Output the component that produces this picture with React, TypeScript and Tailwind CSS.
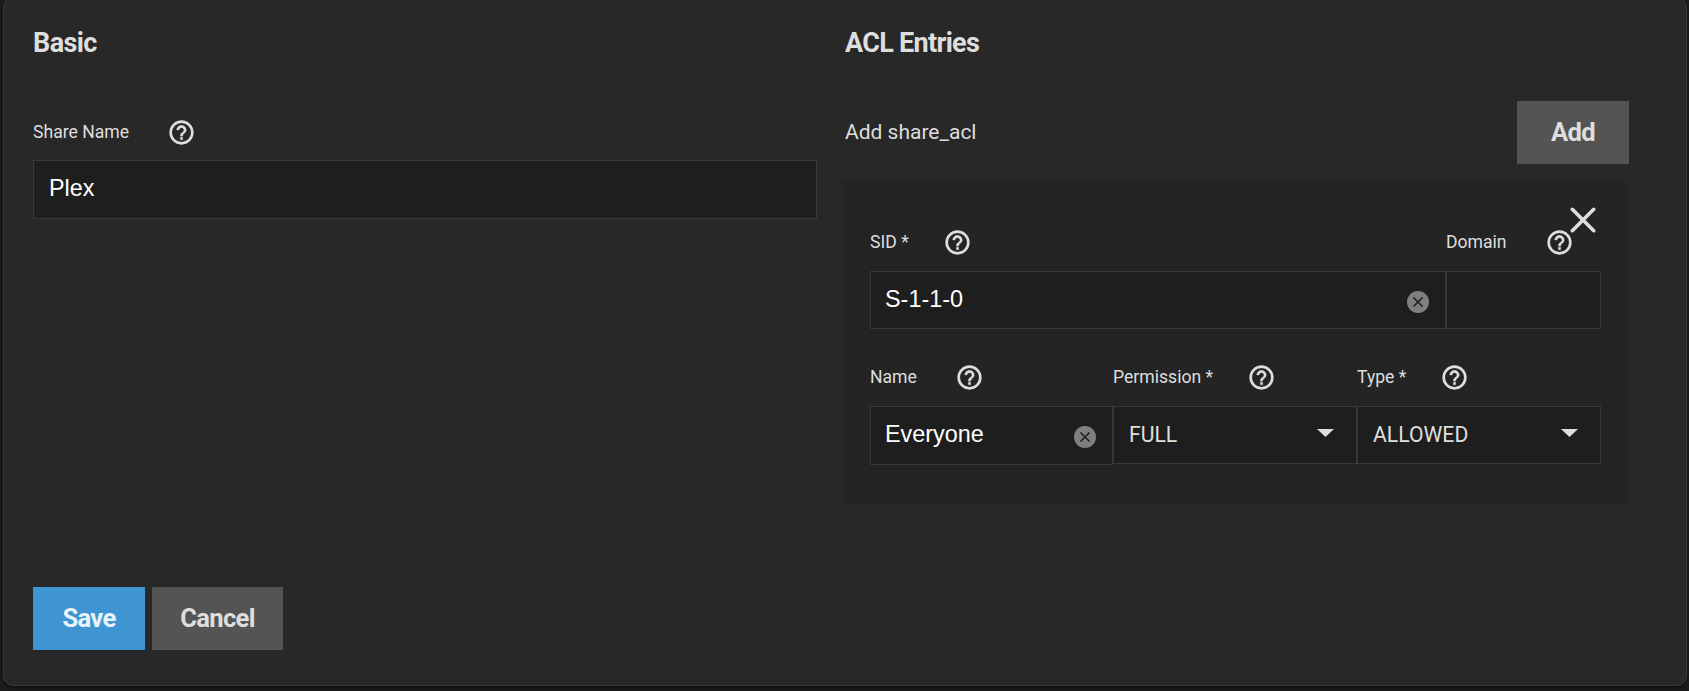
import type { ReactNode } from "react";

function HelpIcon() {
  return (
    <svg viewBox="0 0 24 24" fill="currentColor" className="-mt-px size-[29px] shrink-0">
      <circle cx="12" cy="12" r="8.95" fill="none" stroke="currentColor" strokeWidth="2.2" />
      <path d="M11 18h2v-2h-2v2zm1-12c-2.21 0-4 1.79-4 4h2c0-1.1.9-2 2-2s2 .9 2 2c0 2-3 1.75-3 5h2c0-2.25 3-2.5 3-5 0-2.21-1.79-4-4-4z" stroke="currentColor" strokeWidth="0.2" />
    </svg>
  );
}

function Label({ text, gap }: { text: string; gap: string }) {
  return (
    <div className={`flex h-[30px] items-center ${gap}`}>
      <label className="-mt-[3px] text-[17.6px] leading-[26px] font-normal whitespace-nowrap">{text}</label>
      <HelpIcon />
    </div>
  );
}

function CloseIcon() {
  return (
    <svg viewBox="0 0 26 26" className="absolute top-[26px] right-[31px] size-[26px]">
      <path d="M2.3 2.3 23.7 23.7M23.7 2.3 2.3 23.7" stroke="currentColor" strokeWidth="3.6" strokeLinecap="round" />
    </svg>
  );
}

function ClearIcon() {
  return (
    <svg viewBox="0 0 22 22" className="mt-[3px] size-[22px] shrink-0">
      <circle cx="11" cy="11" r="11" fill="#7f7f7f" />
      <path d="M6.5 6.5 15.5 15.5M15.5 6.5 6.5 15.5" stroke="#1e1e1e" strokeWidth="1.6" />
    </svg>
  );
}

function TextBox({ value, className, clearable }: { value: string; className: string; clearable?: boolean }) {
  return (
    <div
      className={`flex items-center justify-between border border-[#383838] bg-[#1e1e1e] pr-4 font-['Liberation_Sans',Arial,sans-serif] text-[23.4px] text-white ${className}`}
    >
      <span className="-mt-[3px] leading-7">{value}</span>
      {clearable && <ClearIcon />}
    </div>
  );
}

function SelectBox({ value }: { value: string }) {
  return (
    <div className="flex h-[58px] items-center justify-between border border-[#383838] bg-[#1e1e1e] pr-[22px] pl-[15px] text-[21.2px]">
      <span className="-mt-px leading-7">{value}</span>
      <svg viewBox="0 0 17 8" className="-mt-1 h-2 w-[17px]">
        <path d="M0 0h17L8.5 8z" fill="currentColor" />
      </svg>
    </div>
  );
}

function Button({ children, className }: { children: ReactNode; className: string }) {
  return (
    <button className={`h-[63px] text-[25.6px] font-bold tracking-[-0.7px] ${className}`}>
      {children}
    </button>
  );
}

export default function App() {
  return (
    <div className="h-[691px] overflow-hidden bg-[#1c1c1c] pr-[2px] pl-[3px] font-[Roboto,sans-serif] text-[#dedede]">
      <form className="-mt-[3px] flex h-[689px] flex-col rounded-[10px] border border-[#383838] bg-[#282828] pr-[57px] pl-[29px] shadow-[0_2px_4px_rgba(0,0,0,0.5)]">
        <div className="flex h-[587px] gap-[26px]">
          <section className="w-[784px] pt-[27px]">
            <h2 className="text-[27px] leading-9 font-bold tracking-[-0.6px]">Basic</h2>
            <div className="mt-[57px]">
              <Label text="Share Name" gap="gap-[38px]" />
              <TextBox value="Plex" className="mt-[12px] h-[59px] pl-[15px]" />
            </div>
          </section>

          <section className="w-[786px] pt-[27px]">
            <h2 className="pl-[2px] text-[27px] leading-9 font-bold tracking-[-0.7px]">ACL Entries</h2>
            <div className="mt-[40px] flex items-center justify-between pl-[2px]">
              <span className="text-[21px]">Add share_acl</span>
              <Button className="w-[112px] bg-[#545454]">Add</Button>
            </div>

            <div className="relative mt-[17px] h-[324px] w-[784px] rounded-[2px] bg-[#242424] pt-[47px] pr-[26px] pl-[27px]">
              <CloseIcon />
              <div className="flex">
                <div className="w-[576px]">
                  <Label text="SID *" gap="gap-[34px]" />
                  <TextBox value="S-1-1-0" clearable className="mt-[13px] h-[58px] pl-[14px]" />
                </div>
                <div className="w-[155px]">
                  <Label text="Domain" gap="gap-[38px]" />
                  <TextBox value="" className="mt-[13px] h-[58px] pl-[14px]" />
                </div>
              </div>
              <div className="mt-[34px] grid grid-cols-[243px_244px_244px]">
                <div>
                  <Label text="Name" gap="gap-[38px]" />
                  <TextBox value="Everyone" clearable className="mt-[13px] h-[59px] pl-[14px]" />
                </div>
                <div>
                  <Label text="Permission *" gap="gap-[34px]" />
                  <div className="mt-[13px]">
                    <SelectBox value="FULL" />
                  </div>
                </div>
                <div>
                  <Label text="Type *" gap="gap-[34px]" />
                  <div className="mt-[13px]">
                    <SelectBox value="ALLOWED" />
                  </div>
                </div>
              </div>
            </div>
          </section>
        </div>

        <div className="mt-[2px] flex gap-[7px]">
          <Button className="w-[112px] bg-[#3f95d2] text-[#e8f3fb]">Save</Button>
          <Button className="w-[131px] bg-[#545454]">Cancel</Button>
        </div>
      </form>
    </div>
  );
}
